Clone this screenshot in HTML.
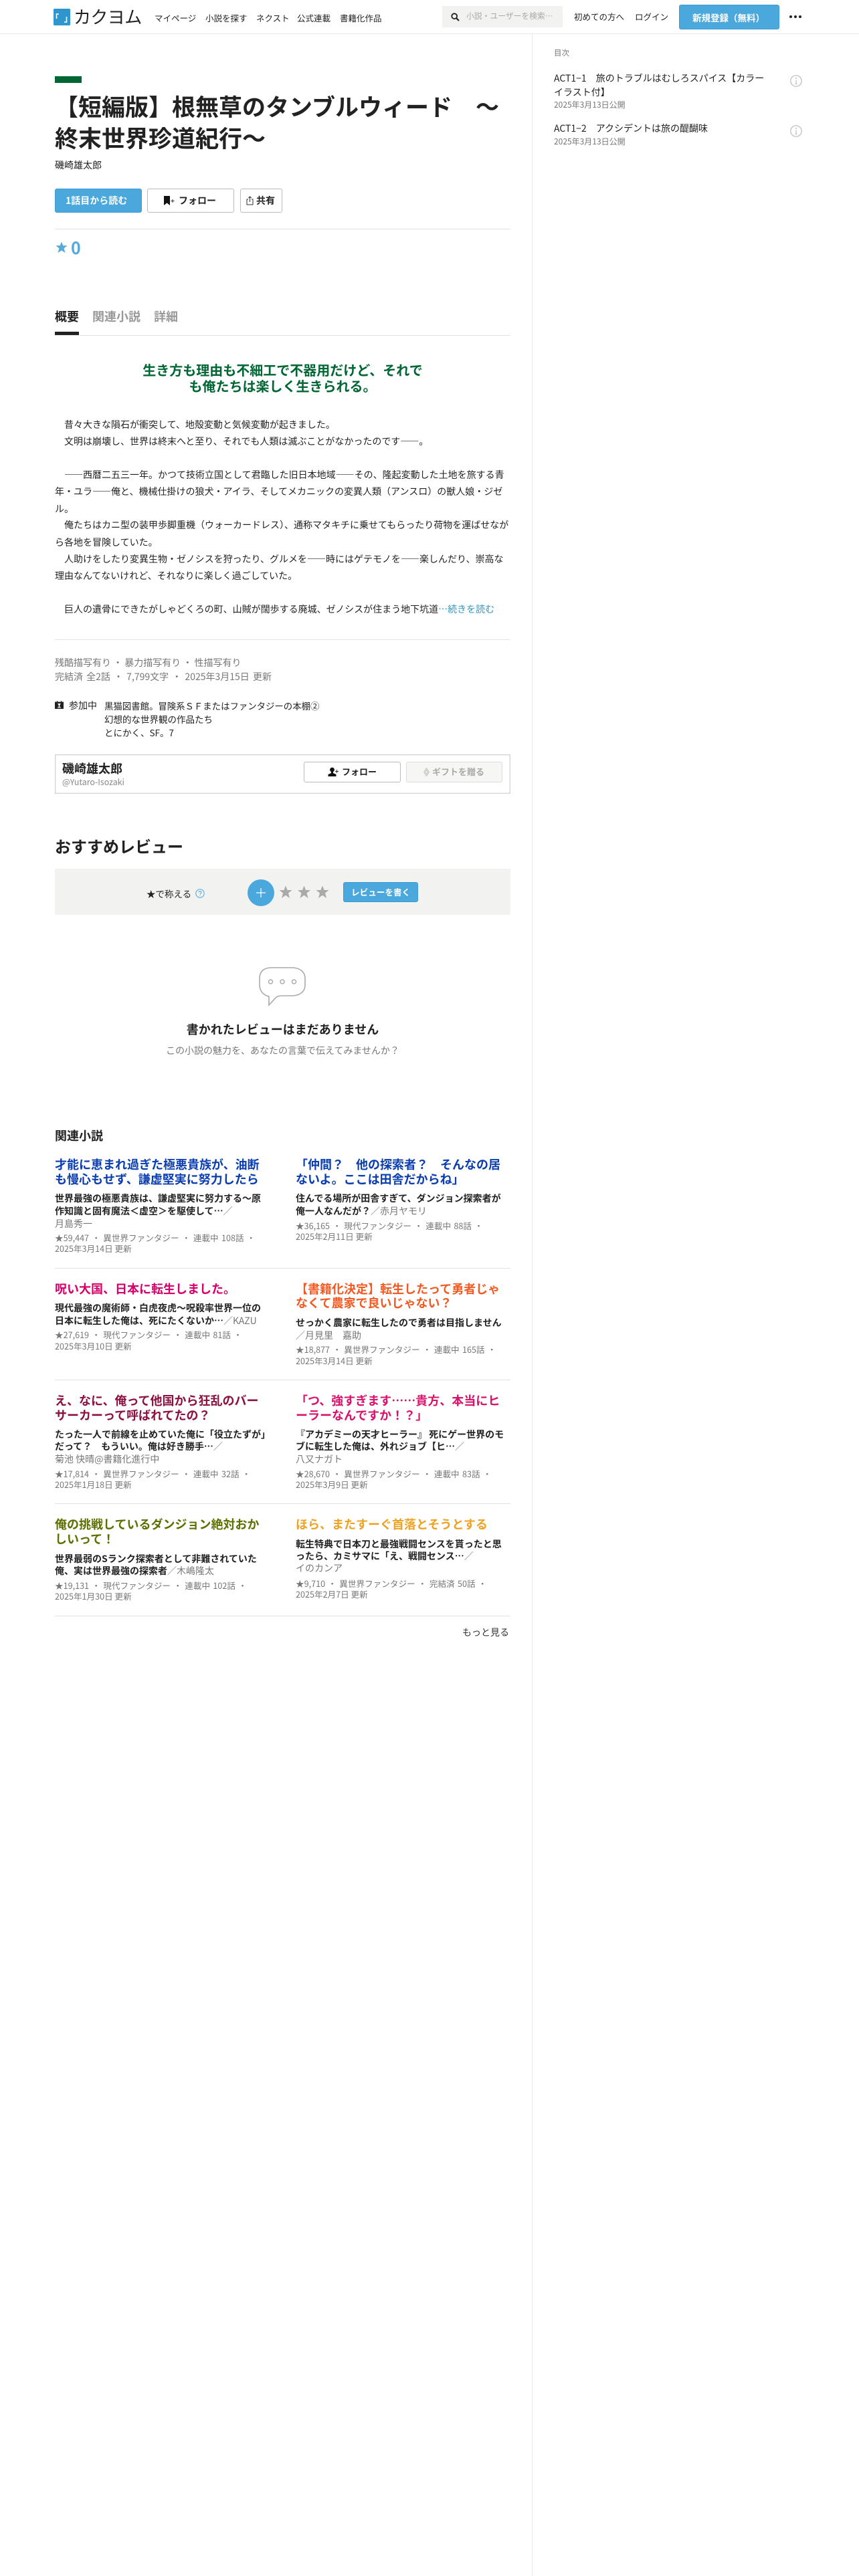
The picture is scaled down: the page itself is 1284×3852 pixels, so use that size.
<!DOCTYPE html>
<html lang="ja"><head><meta charset="utf-8"><title>【短編版】根無草のタンブルウィード &#x3000;&#xFF5E;終末世界珍道紀行&#xFF5E;</title>
<style>
*{box-sizing:border-box}
html,body{margin:0;padding:0;background:#fff}
body{width:1284px;height:3852px;position:relative;overflow:hidden;color:#222}
body,.n{font-family:"Noto Sans CJK JP","Liberation Sans",sans-serif}
.t{position:absolute;white-space:nowrap;height:20px;line-height:20px;font-size:14px}
.b{font-weight:700}
.g{color:#777}
.h{position:absolute;left:82px;width:681px;height:1px;background:#e2e2e2}
.box{position:absolute}
.ti{font-size:18px;font-weight:700;height:22px;line-height:22px}
.d{font-weight:700;font-size:14px;height:19px;line-height:19px;color:#222}
.d span{font-weight:400;color:#777}
.m{font-size:12.6px;color:#777;height:16px;line-height:16px;word-spacing:1.5px}
.m2{word-spacing:0}
</style></head><body>
<div class="box" style="left:0;top:50px;width:1284px;height:1px;background:#eaeaea"></div>
<div class="box" style="left:795px;top:51px;width:1px;height:3801px;background:#e8e8e8"></div>

<svg class="box" style="left:80px;top:13px" width="25" height="25" viewBox="0 0 25 25"><rect width="25" height="25" rx="1.5" fill="#2e96cc"/><path d="M8 8H4.5V15M16 20H19.5V12" fill="none" stroke="#fff" stroke-width="1.6"/></svg>
<div class="t" style="left:110px;top:9px;height:32px;line-height:32px;font-size:26px;letter-spacing:-.6px;color:#222">カクヨム</div>

<div class="t" style="left:231px;top:17px;font-size:12.5px">マイページ</div>
<div class="t" style="left:307px;top:17px;font-size:12.5px">小説を探す</div>
<div class="t" style="left:383px;top:17px;font-size:12.5px">ネクスト</div>
<div class="t" style="left:444px;top:17px;font-size:12.5px">公式連載</div>
<div class="t" style="left:508px;top:17px;font-size:12.5px">書籍化作品</div>

<div class="box" style="left:661px;top:9px;width:180px;height:32px;background:#f2f2f0;border-radius:1px"></div>
<svg class="box" style="left:674px;top:19px" width="13" height="13" viewBox="0 0 13 13"><circle cx="5.2" cy="5.2" r="3.9" fill="none" stroke="#222" stroke-width="1.8"/><path d="M8 8L12 12" stroke="#222" stroke-width="2.2"/></svg>
<div class="t" style="left:697px;top:14px;font-size:11.8px;color:#aaa">小説・ユーザーを検索…</div>
<div class="t" style="left:858px;top:15px;font-size:12.5px">初めての方へ</div>
<div class="t" style="left:949px;top:15px;font-size:12.5px">ログイン</div>
<div class="box" style="left:1015px;top:7px;width:150px;height:37px;background:#4aa8dc;border:1px solid #3f9cd0;border-radius:3px"></div>
<div class="t b" style="left:1035px;top:16px;font-size:13.5px;color:#fff">新規登録&#xFF08;無料&#xFF09;</div>
<svg class="box" style="left:1179px;top:22px" width="20" height="6"><circle cx="3" cy="3" r="2" fill="#222"/><circle cx="10" cy="3" r="2" fill="#222"/><circle cx="17" cy="3" r="2" fill="#222"/></svg>

<div class="t g" style="left:828px;top:69px;font-size:11.5px">目次</div>
<div class="t" style="left:828px;top:107px">ACT1−1&#x3000;旅のトラブルはむしろスパイス【カラー</div>
<div class="t" style="left:828px;top:128px">イラスト付】</div>
<div class="t g" style="left:828px;top:147px;font-size:12px">2025年3月13日公開</div>
<div class="t" style="left:828px;top:182px">ACT1−2&#x3000;アクシデントは旅の醍醐味</div>
<div class="t g" style="left:828px;top:202px;font-size:12px">2025年3月13日公開</div>
<svg class="box" style="left:1181px;top:112px" width="18" height="18" viewBox="0 0 18 18"><circle cx="9" cy="9" r="8.2" fill="none" stroke="#bbb" stroke-width="1.2"/><path d="M9 7.5V13.5M7.5 13.5H10.5" stroke="#bbb" stroke-width="1.1" fill="none"/><circle cx="9" cy="5" r="1" fill="#bbb"/></svg>
<svg class="box" style="left:1181px;top:187px" width="18" height="18" viewBox="0 0 18 18"><circle cx="9" cy="9" r="8.2" fill="none" stroke="#bbb" stroke-width="1.2"/><path d="M9 7.5V13.5M7.5 13.5H10.5" stroke="#bbb" stroke-width="1.1" fill="none"/><circle cx="9" cy="5" r="1" fill="#bbb"/></svg>

<div class="box" style="left:82px;top:114px;width:40px;height:10px;background:#006633"></div>
<div class="t b" style="left:82px;top:136px;height:46px;line-height:46px;font-size:35px;color:#222">【短編版】根無草のタンブルウィード&#x3000;&#xFF5E;</div>
<div class="t b" style="left:82px;top:183px;height:46px;line-height:46px;font-size:35px;color:#222">終末世界珍道紀行&#xFF5E;</div>
<div class="t" style="left:82px;top:237px">磯崎雄太郎</div>

<div class="box" style="left:82px;top:282px;width:130px;height:36px;background:#4aa8dc;border:1px solid #3f9cd0;border-radius:3px"></div>
<div class="t b" style="left:98px;top:290px;color:#fff">1話目から読む</div>
<div class="box" style="left:220px;top:282px;width:130px;height:36px;border:1px solid #bbb;border-radius:3px"></div>
<svg class="box" style="left:245px;top:293px" width="18" height="14" viewBox="0 0 18 14"><path d="M0 0H9V14L4.5 10.5L0 14Z" fill="#111"/><path d="M13 5V10M10.5 7.5H15.5" stroke="#333" stroke-width="1"/></svg>
<div class="t b" style="left:267px;top:290px;">フォロー</div>
<div class="box" style="left:359px;top:282px;width:63px;height:36px;border:1px solid #bbb;border-radius:3px"></div>
<svg class="box" style="left:368px;top:293px" width="11" height="14" viewBox="0 0 11 14"><path d="M3 5H1V13H10V5H8M5.5 9V1M3.2 3.2L5.5 1L7.8 3.2" fill="none" stroke="#333" stroke-width="1"/></svg>
<div class="t b" style="left:383px;top:290px;">共有</div>

<div class="h" style="top:342px"></div>
<svg class="box" style="left:83px;top:361px" width="18" height="18" viewBox="0 0 20 20"><path d="M10 0.5L12.6 7H19.5L14 11.5L16.1 19L10 14.8L3.9 19L6 11.5L0.5 7H7.4Z" fill="#55aadb"/></svg>
<div class="t b" style="left:106px;top:355px;height:30px;line-height:30px;font-size:25px;color:#55aadb">0</div>

<div class="t b" style="left:82px;top:462px;height:22px;line-height:22px;font-size:18px">概要</div>
<div class="t b" style="left:138px;top:462px;height:22px;line-height:22px;font-size:18px;color:#999">関連小説</div>
<div class="t b" style="left:230px;top:462px;height:22px;line-height:22px;font-size:18px;color:#999">詳細</div>
<div class="box" style="left:82px;top:501px;width:681px;height:1px;background:#e2e2e2"></div>
<div class="box" style="left:82px;top:496px;width:36px;height:5px;background:#222"></div>

<div class="t b" style="left:82px;width:681px;text-align:center;top:541px;height:24px;line-height:24px;font-size:20px;color:#006633">生き方も理由も不細工で不器用だけど、それで</div>
<div class="t b" style="left:82px;width:681px;text-align:center;top:565px;height:24px;line-height:24px;font-size:20px;color:#006633">も俺たちは楽しく生きられる。</div>

<div class="t" style="left:82px;top:625px">&#x3000;昔々大きな隕石が衝突して、地殻変動と気候変動が起きました。</div>
<div class="t" style="left:82px;top:650px">&#x3000;文明は崩壊し、世界は終末へと至り、それでも人類は滅ぶことがなかったのです――。</div>
<div class="t" style="left:82px;top:700px">&#x3000;――西暦二五三一年。かつて技術立国として君臨した旧日本地域――その、隆起変動した土地を旅する青</div>
<div class="t" style="left:82px;top:725px">年・ユラ――俺と、機械仕掛けの狼犬・アイラ、そしてメカニックの変異人類&#xFF08;アンスロ&#xFF09;の獣人娘・ジゼ</div>
<div class="t" style="left:82px;top:751px">ル。</div>
<div class="t" style="left:82px;top:775px">&#x3000;俺たちはカニ型の装甲歩脚重機&#xFF08;ウォーカードレス&#xFF09;、通称マタキチに乗せてもらったり荷物を運ばせなが</div>
<div class="t" style="left:82px;top:801px">ら各地を冒険していた。</div>
<div class="t" style="left:82px;top:826px">&#x3000;人助けをしたり変異生物・ゼノシスを狩ったり、グルメを――時にはゲテモノを――楽しんだり、崇高な</div>
<div class="t" style="left:82px;top:851px">理由なんてないけれど、それなりに楽しく過ごしていた。</div>
<div class="t" style="left:82px;top:901px">&#x3000;巨人の遺骨にできたがしゃどくろの町、山賊が闊歩する廃城、ゼノシスが住まう地下坑道<span style="color:#3796bd">…続きを読む</span></div>

<div class="h" style="top:956px"></div>
<div class="t g" style="left:82px;top:981px">残酷描写有り ・ 暴力描写有り ・ 性描写有り</div>
<div class="t g" style="left:82px;top:1002px;word-spacing:2px">完結済 全2話 ・ 7,799文字 ・ 2025年3月15日 更新</div>
<svg class="box" style="left:82px;top:1048px" width="13" height="12" viewBox="0 0 13 12"><path d="M0 1.5H3V0H4V1.5H9V0H10V1.5H13V12H0Z" fill="#222"/><path d="M4 4H9L7.3 6.5V9.5H9V10.5H4V9.5H5.7V6.5Z" fill="#fff"/></svg>
<div class="t" style="left:103px;top:1045px">参加中</div>
<div class="t" style="left:156px;top:1045px;font-size:13.4px">黒猫図書館。冒険系&#xFF33;&#xFF26;またはファンタジーの本棚②</div>
<div class="t" style="left:156px;top:1065px;font-size:13.5px">幻想的な世界観の作品たち</div>
<div class="t" style="left:156px;top:1085px;font-size:13.5px">とにかく、SF。7</div>

<div class="box" style="left:82px;top:1128px;width:681px;height:59px;border:1px solid #d5d5d5;box-shadow:inset 0 0 0 .5px #e0e0e0"></div>
<div class="t b" style="left:93px;top:1138px;height:22px;line-height:22px;font-size:18px">磯崎雄太郎</div>
<div class="t" style="left:93px;top:1159px;font-size:12.4px;color:#888">@Yutaro-Isozaki</div>
<div class="box" style="left:454px;top:1139px;width:145px;height:31px;border:1px solid #bbb;border-radius:3px"></div>
<svg class="box" style="left:490px;top:1147px" width="17" height="15" viewBox="0 0 17 15"><circle cx="6.5" cy="4" r="3.4" fill="#111"/><path d="M5 6.5H8V9L12.5 11V14H.5V11L5 9Z" fill="#111"/><path d="M13.5 4V9M11 6.5H16" stroke="#333" stroke-width="1"/></svg>
<div class="t b" style="left:511px;top:1144px;font-size:13px">フォロー</div>
<div class="box" style="left:607px;top:1139px;width:144px;height:31px;background:#f6f6f4;border:1px solid #ddd;border-radius:3px"></div>
<svg class="box" style="left:633px;top:1148px" width="9" height="13" viewBox="0 0 9 13"><path d="M4.5 .7L8.3 6.5L4.5 12.3L.7 6.5Z" fill="none" stroke="#bbb"/><path d="M4.5 3.5L6.4 6.5L4.5 9.5L2.6 6.5Z" fill="none" stroke="#bbb" stroke-width=".8"/></svg>
<div class="t b" style="left:646px;top:1144px;font-size:13px;color:#aaa">ギフトを贈る</div>

<div class="t b" style="left:82px;top:1250px;height:30px;line-height:30px;font-size:24px">おすすめレビュー</div>
<div class="box" style="left:82px;top:1299px;width:681px;height:69px;background:#f2f2f0"></div>
<div class="t" style="left:219px;top:1326px;font-size:13.5px">★で称える</div>
<svg class="box" style="left:292px;top:1329px" width="14" height="14" viewBox="0 0 14 14"><circle cx="7" cy="7" r="6.2" fill="none" stroke="#4aa8dc" stroke-width="1"/><path d="M5 5.3C5 3.2 9 3.2 9 5.3C9 7 7 7 7 8.8M7 10V11" fill="none" stroke="#4aa8dc" stroke-width="1"/></svg>
<div class="box" style="left:370px;top:1315px;width:40px;height:40px;border-radius:50%;background:#4aa8dc"></div>
<svg class="box" style="left:382px;top:1327px" width="16" height="16"><path d="M8 1V15M1 8H15" stroke="#fff" stroke-width="1.2"/></svg>
<svg class="box" style="left:417px;top:1324px" width="75" height="20" viewBox="0 0 75 20"><g fill="#aaa"><path d="M10 .5L12.6 7H19.5L14 11.5L16.1 19L10 14.8L3.9 19L6 11.5L.5 7H7.4Z"/><path transform="translate(27.5)" d="M10 .5L12.6 7H19.5L14 11.5L16.1 19L10 14.8L3.9 19L6 11.5L.5 7H7.4Z"/><path transform="translate(55)" d="M10 .5L12.6 7H19.5L14 11.5L16.1 19L10 14.8L3.9 19L6 11.5L.5 7H7.4Z"/></g></svg>
<div class="box" style="left:513px;top:1319px;width:112px;height:30px;background:#4aa8dc;border:1px solid #3f9cd0;border-radius:3px"></div>
<div class="t b" style="left:525px;top:1324px;font-size:12.6px;color:#fff">レビューを書く</div>

<svg class="box" style="left:386px;top:1445px" width="72" height="60" viewBox="0 0 72 60"><path d="M20 2H50C62 2 70 8 70 18V28C70 38 62 44 50 44H37C33 44 30 44 27 46L16 58V45C7 43 2 36 2 28V18C2 8 8 2 20 2Z" fill="none" stroke="#aaa" stroke-width="1.6"/><g fill="none" stroke="#aaa" stroke-width="1.5"><circle cx="18.5" cy="23" r="3"/><circle cx="36" cy="23" r="3"/><circle cx="53.5" cy="23" r="3"/></g></svg>
<div class="t b" style="left:82px;width:681px;text-align:center;top:1528px;height:22px;line-height:22px;font-size:18px">書かれたレビューはまだありません</div>
<div class="t g" style="left:82px;width:681px;text-align:center;top:1561px">この小説の魅力を、あなたの言葉で伝えてみませんか&#xFF1F;</div>

<div class="t b" style="left:82px;top:1687px;height:22px;line-height:22px;font-size:18px">関連小説</div>

<!-- row 1 -->
<div class="t ti" style="left:82px;top:1730px;color:#0a3db0">才能に恵まれ過ぎた極悪貴族が、油断</div>
<div class="t ti" style="left:82px;top:1752px;color:#0a3db0">も慢心もせず、謙虚堅実に努力したら</div>
<div class="t d" style="left:82px;top:1783px">世界最強の極悪貴族は、謙虚堅実に努力する&#xFF5E;原</div>
<div class="t d" style="left:82px;top:1802px">作知識と固有魔法&#xFF1C;虚空&#xFF1E;を駆使して…<span>&#xFF0F;</span></div>
<div class="t d" style="left:82px;top:1821px"><span>月島秀一</span></div>
<div class="t m" style="left:82px;top:1843px">★59,447 ・ 異世界ファンタジー ・ 連載中 108話 ・</div>
<div class="t m m2" style="left:82px;top:1859px">2025年3月14日 更新</div>

<div class="t ti" style="left:442px;top:1730px;color:#0a3db0">「仲間&#xFF1F;&#x3000;他の探索者&#xFF1F;&#x3000;そんなの居</div>
<div class="t ti" style="left:442px;top:1752px;color:#0a3db0">ないよ。ここは田舎だからね」</div>
<div class="t d" style="left:442px;top:1783px">住んでる場所が田舎すぎて、ダンジョン探索者が</div>
<div class="t d" style="left:442px;top:1802px">俺一人なんだが&#xFF1F;<span>&#xFF0F;赤月ヤモリ</span></div>
<div class="t m" style="left:442px;top:1825px">★36,165 ・ 現代ファンタジー ・ 連載中 88話 ・</div>
<div class="t m m2" style="left:442px;top:1841px">2025年2月11日 更新</div>
<div class="h" style="top:1896px"></div>

<!-- row 2 -->
<div class="t ti" style="left:82px;top:1916px;color:#d6006c">呪い大国、日本に転生しました。</div>
<div class="t d" style="left:82px;top:1947px">現代最強の魔術師・白虎夜虎&#xFF5E;呪殺率世界一位の</div>
<div class="t d" style="left:82px;top:1966px">日本に転生した俺は、死にたくないか…<span>&#xFF0F;KAZU</span></div>
<div class="t m" style="left:82px;top:1988px">★27,619 ・ 現代ファンタジー ・ 連載中 81話 ・</div>
<div class="t m m2" style="left:82px;top:2005px">2025年3月10日 更新</div>

<div class="t ti" style="left:442px;top:1916px;color:#f15a22">【書籍化決定】転生したって勇者じゃ</div>
<div class="t ti" style="left:442px;top:1937px;color:#f15a22">なくて農家で良いじゃない&#xFF1F;</div>
<div class="t d" style="left:442px;top:1969px">せっかく農家に転生したので勇者は目指しません</div>
<div class="t d" style="left:442px;top:1988px"><span>&#xFF0F;月見里&#x3000;嘉助</span></div>
<div class="t m" style="left:442px;top:2010px">★18,877 ・ 異世界ファンタジー ・ 連載中 165話 ・</div>
<div class="t m m2" style="left:442px;top:2027px">2025年3月14日 更新</div>
<div class="h" style="top:2063px"></div>

<!-- row 3 -->
<div class="t ti" style="left:82px;top:2083px;color:#8c1040">え、なに、俺って他国から狂乱のバー</div>
<div class="t ti" style="left:82px;top:2105px;color:#8c1040">サーカーって呼ばれてたの&#xFF1F;</div>
<div class="t d" style="left:82px;top:2136px">たった一人で前線を止めていた俺に「役立たずが」</div>
<div class="t d" style="left:82px;top:2154px">だって&#xFF1F;&#x3000;もういい。俺は好き勝手…<span>&#xFF0F;</span></div>
<div class="t d" style="left:82px;top:2173px"><span>菊池 快晴@書籍化進行中</span></div>
<div class="t m" style="left:82px;top:2196px">★17,814 ・ 異世界ファンタジー ・ 連載中 32話 ・</div>
<div class="t m m2" style="left:82px;top:2212px">2025年1月18日 更新</div>

<div class="t ti" style="left:442px;top:2083px;color:#d9126c">「つ、強すぎます……貴方、本当にヒ</div>
<div class="t ti" style="left:442px;top:2105px;color:#d9126c">ーラーなんですか&#xFF01;&#xFF1F;」</div>
<div class="t d" style="left:442px;top:2136px">『アカデミーの天才ヒーラー』 死にゲー世界のモ</div>
<div class="t d" style="left:442px;top:2154px">ブに転生した俺は、外れジョブ【ヒ…<span>&#xFF0F;</span></div>
<div class="t d" style="left:442px;top:2173px"><span>八又ナガト</span></div>
<div class="t m" style="left:442px;top:2196px">★28,670 ・ 異世界ファンタジー ・ 連載中 83話 ・</div>
<div class="t m m2" style="left:442px;top:2212px">2025年3月9日 更新</div>
<div class="h" style="top:2248px"></div>

<!-- row 4 -->
<div class="t ti" style="left:82px;top:2268px;color:#5c7000">俺の挑戦しているダンジョン絶対おか</div>
<div class="t ti" style="left:82px;top:2290px;color:#5c7000">しいって&#xFF01;</div>
<div class="t d" style="left:82px;top:2322px">世界最弱のSランク探索者として非難されていた</div>
<div class="t d" style="left:82px;top:2340px">俺、実は世界最強の探索者<span>&#xFF0F;木嶋隆太</span></div>
<div class="t m" style="left:82px;top:2363px">★19,131 ・ 現代ファンタジー ・ 連載中 102話 ・</div>
<div class="t m m2" style="left:82px;top:2379px">2025年1月30日 更新</div>

<div class="t ti" style="left:442px;top:2268px;color:#eea222">ほら、またすーぐ首落とそうとする</div>
<div class="t d" style="left:442px;top:2300px">転生特典で日本刀と最強戦闘センスを貰ったと思</div>
<div class="t d" style="left:442px;top:2318px">ったら、カミサマに「え、戦闘センス…<span>&#xFF0F;</span></div>
<div class="t d" style="left:442px;top:2336px"><span>イのカンア</span></div>
<div class="t m" style="left:442px;top:2360px">★9,710 ・ 異世界ファンタジー ・ 完結済 50話 ・</div>
<div class="t m m2" style="left:442px;top:2376px">2025年2月7日 更新</div>
<div class="h" style="top:2416px"></div>

<div class="t" style="left:691px;top:2431px;color:#333">もっと見る</div>
</body></html>
